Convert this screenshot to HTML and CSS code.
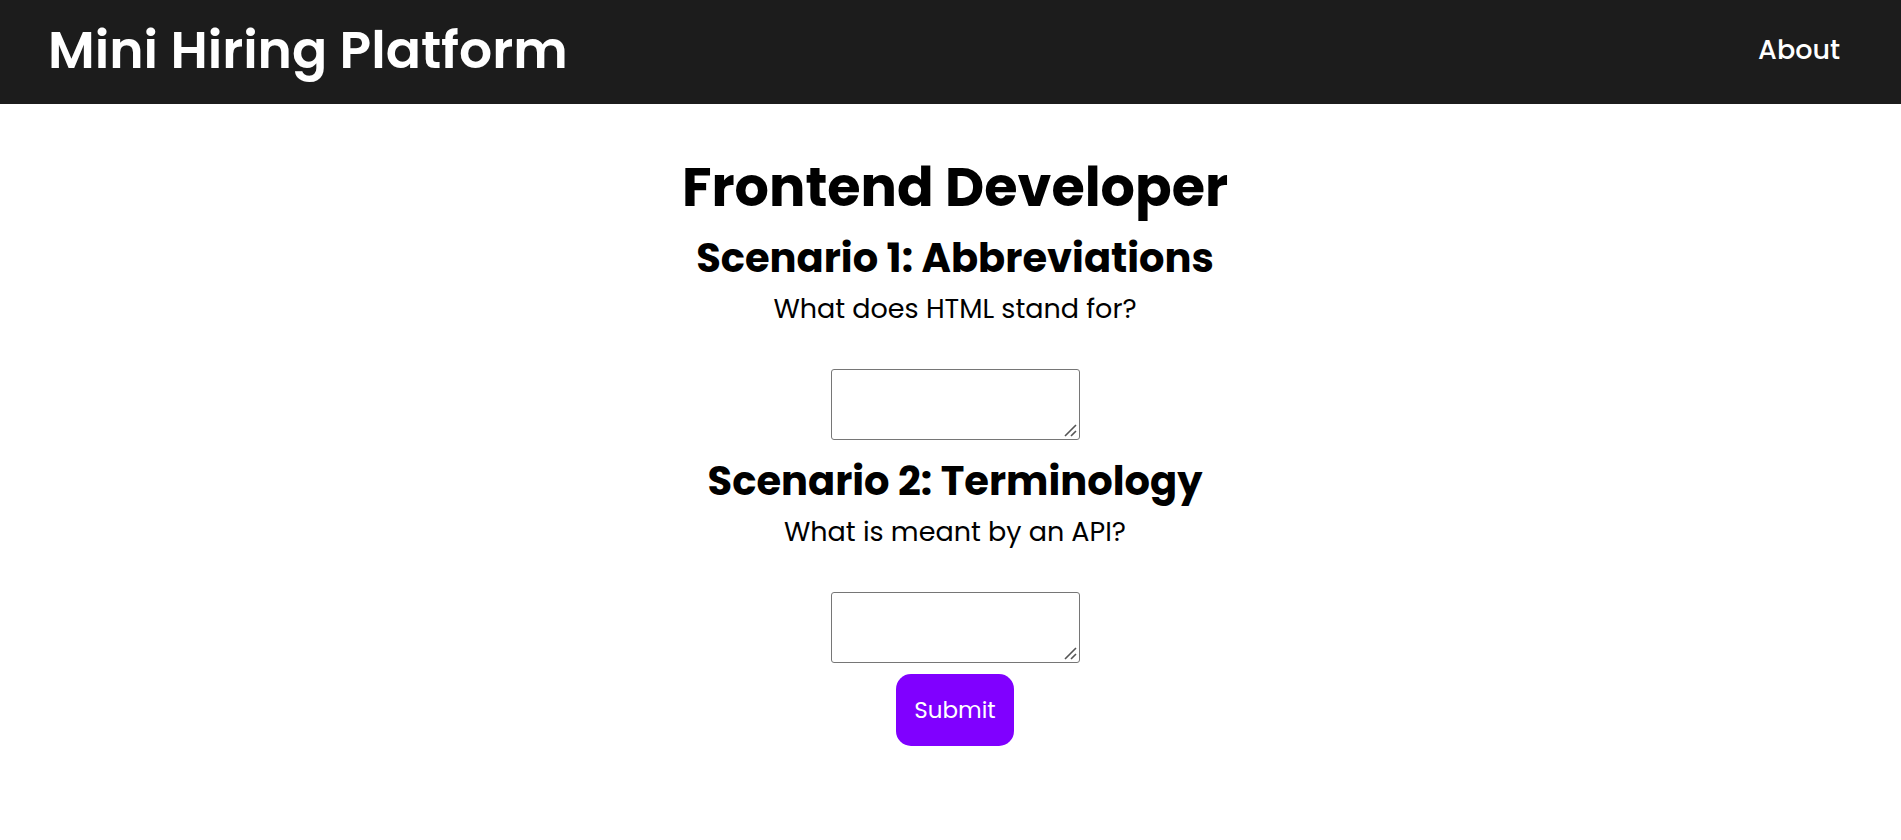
FILE: index.html
```
<!DOCTYPE html>
<html lang="en">
<head>
<meta charset="utf-8">
<meta name="viewport" content="width=device-width, initial-scale=1">
<title>Mini Hiring Platform</title>
<link rel="stylesheet" href="styles.css">
</head>
<body>
<header class="header">
  <div class="brand">Mini Hiring Platform</div>
  <nav><a class="nav-link" href="#about">About</a></nav>
</header>
<main class="content">
  <h1 class="title">Frontend Developer</h1>
  <form class="form">
    <section class="scenario">
      <h2 class="scenario-title">Scenario 1: Abbreviations</h2>
      <label class="question" for="answer-1">What does HTML stand for?</label>
      <textarea class="answer" id="answer-1"></textarea>
    </section>
    <section class="scenario">
      <h2 class="scenario-title">Scenario 2: Terminology</h2>
      <label class="question" for="answer-2">What is meant by an API?</label>
      <textarea class="answer" id="answer-2"></textarea>
    </section>
    <button class="submit" type="submit">Submit</button>
  </form>
</main>
</body>
</html>
```
FILE: styles.css
```
* {
  box-sizing: border-box;
  margin: 0;
}

body {
  font-family: Poppins, Inter, "Open Sans", sans-serif;
  color: #000;
  background: #fff;
}

.header {
  display: flex;
  align-items: center;
  justify-content: space-between;
  padding: 10px 61px 14px 48px;
  background: #1c1c1c;
  color: #fff;
}

.brand {
  font-size: 52px;
  line-height: 80px;
  font-weight: 600;
}

.nav-link {
  color: inherit;
  font-size: 27px;
  line-height: 40px;
  font-weight: 500;
  text-decoration: none;
}

.content {
  display: flex;
  flex-direction: column;
  align-items: center;
  padding: 43px 0 40px 9px;
  text-align: center;
}

.title {
  font-size: 54px;
  line-height: 80px;
  font-weight: 700;
}

.form,
.scenario {
  display: flex;
  flex-direction: column;
  align-items: center;
}

.form {
  gap: 11px;
  padding-top: 1px;
}

.scenario-title {
  font-size: 40px;
  line-height: 61px;
  font-weight: 700;
}

.question {
  font-size: 27px;
  line-height: 40px;
  font-weight: 400;
}

.answer {
  width: 249px;
  height: 71px;
  margin-top: 40px;
  border: 1px solid #767676;
  border-radius: 3px;
  background: #fff;
  font: inherit;
}

.answer::-webkit-resizer {
  background: url("data:image/svg+xml,%3Csvg xmlns='http://www.w3.org/2000/svg' width='15' height='15' viewBox='0 0 15 15'%3E%3Cpath d='M1 12 12 1M7 12l5-5' fill='none' stroke='%23555' stroke-width='1.6'/%3E%3C/svg%3E") no-repeat;
}

.submit {
  padding: 18px;
  border: 0;
  border-radius: 15px;
  background: #8000ff;
  color: #fff;
  font-family: inherit;
  font-size: 23px;
  line-height: 36px;
}
```
